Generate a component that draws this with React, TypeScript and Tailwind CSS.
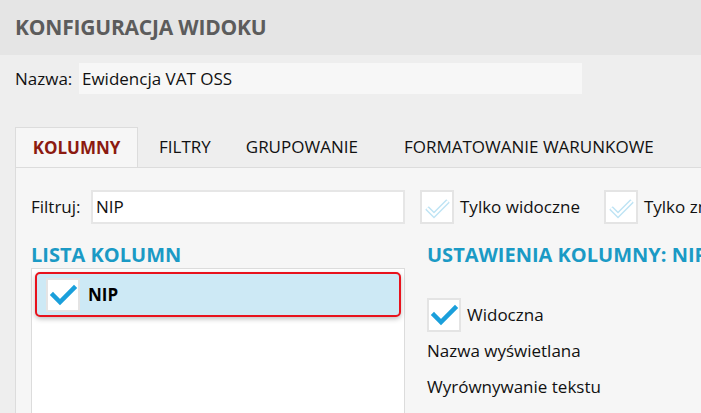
import type { ReactNode } from "react";

function CheckBox({ on, faded }: { on?: boolean; faded?: boolean }) {
  return (
    <span className="flex h-[34px] w-[34px] shrink-0 items-center justify-center border-2 border-[#e4e4e4] bg-white">
      <svg width="30" height="30" viewBox="0 0 30 30">
        {on && (
          <polyline points="5,15 12,22 26,8" fill="none" stroke="#1a9fdb" strokeWidth="4.5" strokeLinecap="square" />
        )}
        {faded && (
          <>
            <polyline points="5,16 12,23 26,9" fill="none" stroke="#bfe4f4" strokeWidth="5" strokeLinejoin="miter" />
            <polyline points="5,16 12,23 26,9" fill="none" stroke="#ffffff" strokeWidth="2" />
          </>
        )}
      </svg>
    </span>
  );
}

function Tab({ children, className = "" }: { children: ReactNode; className?: string }) {
  return <div className={`flex h-[40px] shrink-0 items-center text-[17px] text-[#111] ${className}`}>{children}</div>;
}

export default function App() {
  return (
    <div className="flex h-[413px] w-[701px] flex-col overflow-hidden bg-[#eeeeee] font-['Open_Sans',sans-serif] text-[#111]">
      <div className="flex h-[55px] shrink-0 items-center bg-[#e5e5e5] pl-[15px]">
        <h1 className="text-[21px] font-bold tracking-[-0.2px] text-[#5c5c5c]">KONFIGURACJA WIDOKU</h1>
      </div>

      <div className="mt-[8px] flex h-[31px] shrink-0 items-center pl-[15px]">
        <span className="w-[64px] shrink-0 text-[17px]">Nazwa:</span>
        <div className="flex h-[31px] w-[503px] shrink-0 items-center bg-[#f7f7f7] pl-[3px] text-[17px]">
          Ewidencja VAT OSS
        </div>
      </div>

      <div className="ml-[15px] mt-[33px] flex shrink-0 whitespace-nowrap border-b border-[#dcdcdc]">
        <div className="-mb-px flex h-[40px] w-[123px] shrink-0 items-center justify-center border border-b-0 border-[#dcdcdc] bg-[#f6f6f6] text-[17px] font-bold text-[#8c1a10]">
          KOLUMNY
        </div>
        <Tab className="ml-[21px]">FILTRY</Tab>
        <Tab className="ml-[35px]">GRUPOWANIE</Tab>
        <Tab className="ml-[46px]">FORMATOWANIE WARUNKOWE</Tab>
      </div>

      <div className="ml-[15px] flex-1 overflow-hidden border-l border-[#dcdcdc] bg-[#f6f6f6] pl-[15px]">
        <div className="mt-[22px] flex items-center whitespace-nowrap">
          <span className="w-[60px] shrink-0 text-[17px]">Filtruj:</span>
          <div className="flex h-[34px] w-[314px] shrink-0 items-center border-2 border-[#e6e6e6] bg-white pl-[3px] text-[17px]">
            NIP
          </div>
          <div className="ml-[15px] flex shrink-0 items-center gap-[6px]">
            <CheckBox faded />
            <span className="text-[17px]">Tylko widoczne</span>
          </div>
          <div className="ml-[24px] flex shrink-0 items-center gap-[6px]">
            <CheckBox faded />
            <span className="text-[17px]">Tylko zmienione</span>
          </div>
        </div>

        <div className="mt-[18px] flex">
          <div className="w-[374px] shrink-0">
            <div className="h-[26px] text-[20px] font-bold leading-[26px] text-[#1b9ac5]">LISTA KOLUMN</div>
            <div className="h-[200px] border border-[#dcdcdc] bg-white p-[3px]">
              <div className="flex h-[45px] items-center rounded-[5px] border-2 border-[#e8121c] bg-[#cde9f5] pl-[9px] shadow-[0_2px_5px_rgba(0,0,0,0.25)]">
                <CheckBox on />
                <span className="ml-[8px] text-[17px] font-bold text-black">NIP</span>
              </div>
            </div>
          </div>

          <div className="ml-[22px] shrink-0 whitespace-nowrap">
            <div className="h-[26px] text-[20px] font-bold leading-[26px] text-[#1b9ac5]">USTAWIENIA KOLUMNY: NIP</div>
            <div className="mt-[30px] flex items-center gap-[6px]">
              <CheckBox on />
              <span className="text-[17px]">Widoczna</span>
            </div>
            <div className="mt-[6px] h-[26px] text-[17px] leading-[26px]">Nazwa wyświetlana</div>
            <div className="mt-[10px] h-[26px] text-[17px] leading-[26px]">Wyrównywanie tekstu</div>
          </div>
        </div>
      </div>
    </div>
  );
}
